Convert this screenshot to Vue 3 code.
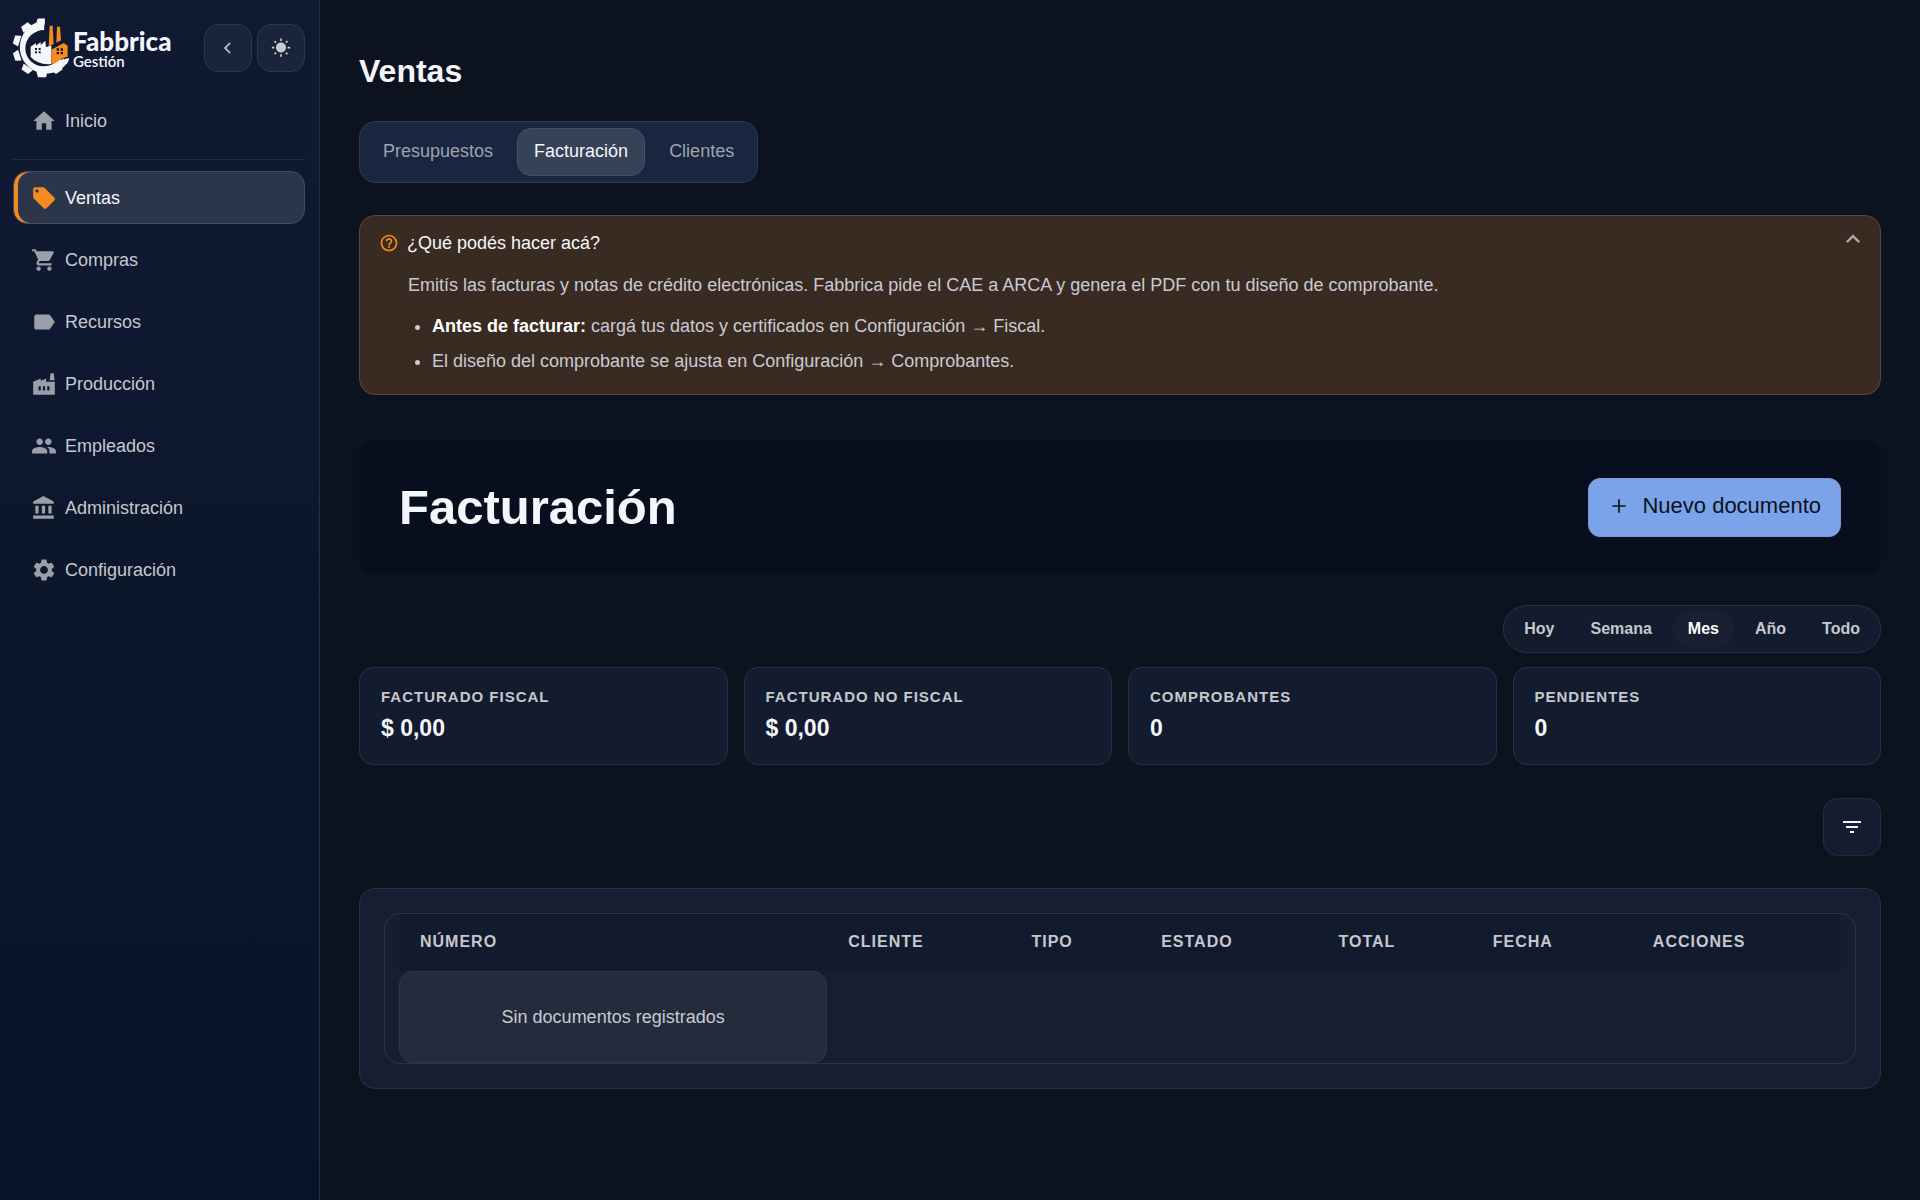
<script setup>
import { ref } from 'vue'

const nav = [
  { label: 'Ventas', d: 'M21.41 11.58l-9-9C12.05 2.22 11.55 2 11 2H4c-1.1 0-2 .9-2 2v7c0 .55.22 1.05.59 1.42l9 9c.36.36.86.58 1.41.58.55 0 1.05-.22 1.41-.59l7-7c.37-.36.59-.86.59-1.41 0-.55-.23-1.06-.59-1.42zM5.5 7C4.67 7 4 6.33 4 5.5S4.67 4 5.5 4 7 4.67 7 5.5 6.33 7 5.5 7z' },
  { label: 'Compras', d: 'M7 18c-1.1 0-1.99.9-1.99 2S5.9 22 7 22s2-.9 2-2-.9-2-2-2zM1 2v2h2l3.6 7.59-1.35 2.45c-.16.28-.25.61-.25.96 0 1.1.9 2 2 2h12v-2H7.42c-.14 0-.25-.11-.25-.25l.03-.12.9-1.63h7.45c.75 0 1.41-.41 1.75-1.03l3.58-6.49c.08-.14.12-.31.12-.48 0-.55-.45-1-1-1H5.21l-.94-2H1zm16 16c-1.1 0-1.99.9-1.99 2s.89 2 1.99 2 2-.9 2-2-.9-2-2-2z' },
  { label: 'Recursos', d: 'M17.63 5.84C17.27 5.33 16.67 5 16 5L5 5.01C3.9 5.01 3 5.9 3 7v10c0 1.1.9 1.99 2 1.99L16 19c.67 0 1.27-.33 1.63-.84L22 12l-4.37-6.16z' },
  { label: 'Producción', d: 'M22 10v12H2V10l7-3v2l5-2v3H22zM17.2 8.5L18 2h3l.8 6.5H17.2zM11 18h2v-4h-2v4zM7 18h2v-4H7v4zM17 14h-2v4h2v-4z' },
  { label: 'Empleados', d: 'M16 11c1.66 0 2.99-1.34 2.99-3S17.66 5 16 5c-1.66 0-3 1.34-3 3s1.34 3 3 3zm-8 0c1.66 0 2.99-1.34 2.99-3S9.66 5 8 5C6.34 5 5 6.34 5 8s1.34 3 3 3zm0 2c-2.33 0-7 1.17-7 3.5V19h14v-2.5c0-2.33-4.67-3.5-7-3.5zm8 0c-.29 0-.62.02-.97.05 1.16.84 1.97 1.97 1.97 3.45V19h6v-2.5c0-2.33-4.67-3.5-7-3.5z' },
  { label: 'Administración', d: 'M4 10v7h3v-7H4zm6 0v7h3v-7h-3zM2 22h19v-3H2v3zm14-12v7h3v-7h-3zm-4.5-9L2 6v2h19V6l-9.5-5z' },
  { label: 'Configuración', d: 'M19.14 12.94c.04-.3.06-.61.06-.94 0-.32-.02-.64-.07-.94l2.03-1.58c.18-.14.23-.41.12-.61l-1.92-3.32c-.12-.22-.37-.29-.59-.22l-2.39.96c-.5-.38-1.03-.7-1.62-.94l-.36-2.54c-.04-.24-.24-.41-.48-.41h-3.84c-.24 0-.43.17-.47.41l-.36 2.54c-.59.24-1.13.57-1.62.94l-2.39-.96c-.22-.08-.47 0-.59.22L2.74 8.87c-.12.21-.08.47.12.61l2.03 1.58c-.05.3-.09.63-.09.94s.02.64.07.94l-2.03 1.58c-.18.14-.23.41-.12.61l1.92 3.32c.12.22.37.29.59.22l2.39-.96c.5.38 1.03.7 1.62.94l.36 2.54c.05.24.24.41.48.41h3.84c.24 0 .44-.17.47-.41l.36-2.54c.59-.24 1.13-.56 1.62-.94l2.39.96c.22.08.47 0 .59-.22l1.92-3.32c.12-.22.07-.47-.12-.61l-2.01-1.58zM12 15.6c-1.98 0-3.6-1.62-3.6-3.6s1.62-3.6 3.6-3.6 3.6 1.62 3.6 3.6-1.62 3.6-3.6 3.6z' },
]
const gearTeeth = [-91, -127, -163, 162, 126, 90, 54, 25]

const tabs = ['Presupuestos', 'Facturación', 'Clientes']
const activeTab = ref('Facturación')

const periods = ['Hoy', 'Semana', 'Mes', 'Año', 'Todo']
const activePeriod = ref('Mes')

const helpOpen = ref(true)

const stats = [
  { label: 'Facturado fiscal', value: '$ 0,00' },
  { label: 'Facturado no fiscal', value: '$ 0,00' },
  { label: 'Comprobantes', value: '0' },
  { label: 'Pendientes', value: '0' },
]
const columns = [
  { key: 'numero', label: 'Número' },
  { key: 'cliente', label: 'Cliente' },
  { key: 'tipo', label: 'Tipo' },
  { key: 'estado', label: 'Estado' },
  { key: 'total', label: 'Total' },
  { key: 'fecha', label: 'Fecha' },
  { key: 'acciones', label: 'Acciones' },
]
</script>

<template>
  <div class="app">
    <aside class="sidebar">
      <div class="brand-row">
        <a class="brand" href="#">
          <svg class="gear" viewBox="24 24 168 180" aria-hidden="true">
            <g fill="#f5f6fb">
              <path d="M118 26V60A54 54 0 1 0 162 147L190 154A79 79 0 1 1 100 36V26z" />
              <path
                v-for="angle in gearTeeth"
                :key="angle"
                d="M-17 -70L-12 -88H12L17 -70z"
                :transform="`translate(111 114) rotate(${angle + 90})`"
              />
            </g>
            <circle cx="115" cy="115" r="54" fill="#0f1932" />
            <path d="M120 22h80v120l-22 6-60-40z" fill="#0f1932" />
            <path d="M77 110L93 99V107L107 96V105L121 92L123 112L139 106V162Q100 166 77 141z" fill="#f5f6fb" />
            <path d="M139 119L176 99L188 107V140Q166 145 156 156Q148 161 139 162z" fill="#f58a1f" />
            <path d="M131 109L134 47H143L146 102zM154 98L156 50H165L168 91z" fill="#f58a1f" />
            <path d="M90 114h6v6h-6zm11 0h6v6h-6zM90 124h6v6h-6zm11 0h6v6h-6zM155 115h7v7h-7zm12 0h7v7h-7zM155 126h7v7h-7zm12 0h7v7h-7z" fill="#0f1932" />
          </svg>
          <span class="brand-text">
            <span class="brand-name">Fabbrica</span>
            <span class="brand-sub">Gestión</span>
          </span>
        </a>
        <div class="brand-actions">
          <button class="square" type="button" aria-label="Contraer menú">
            <svg viewBox="0 0 24 24" width="20" height="20"><path d="M14.5 6l-6 6 6 6" fill="none" stroke="currentColor" stroke-width="2" /></svg>
          </button>
          <button class="square" type="button" aria-label="Cambiar tema">
            <svg viewBox="0 0 24 24" width="20" height="20" fill="currentColor"><path d="M6.76 4.84l-1.8-1.79-1.41 1.41 1.79 1.79 1.42-1.41zM4 10.5H1v2h3v-2zm9-9.95h-2V3.5h2V.55zm7.45 3.91l-1.41-1.41-1.79 1.79 1.41 1.41 1.79-1.79zm-3.21 13.7l1.79 1.8 1.41-1.41-1.8-1.79-1.4 1.4zM20 10.5v2h3v-2h-3zm-8-5c-3.31 0-6 2.69-6 6s2.69 6 6 6 6-2.69 6-6-2.69-6-6-6zm-1 16.95h2V19.5h-2v2.95zm-7.45-3.91l1.41 1.41 1.79-1.8-1.41-1.41-1.79 1.8z" /></svg>
          </button>
        </div>
      </div>

      <nav class="nav" aria-label="Principal">
        <a class="nav-item" href="#">
          <svg viewBox="0 0 24 24" aria-hidden="true"><path d="M10 20v-6h4v6h5v-8h3L12 3 2 12h3v8z" /></svg>
          Inicio
        </a>
        <hr class="divider" />
        <a v-for="item in nav" :key="item.label" class="nav-item" :class="{ active: item.label === 'Ventas' }" href="#">
          <svg viewBox="0 0 24 24" aria-hidden="true"><path :d="item.d" /></svg>
          {{ item.label }}
        </a>
      </nav>
    </aside>

    <main class="main">
      <h1 class="page-title">Ventas</h1>

      <div class="tabs">
        <button
          v-for="tab in tabs"
          :key="tab"
          type="button"
          class="tab"
          :class="{ active: tab === activeTab }"
          @click="activeTab = tab"
        >{{ tab }}</button>
      </div>

      <section class="help">
        <button class="help-head" type="button" :aria-expanded="helpOpen" @click="helpOpen = !helpOpen">
          <svg class="help-icon" viewBox="0 0 24 24" aria-hidden="true"><path d="M11 18h2v-2h-2v2zm1-16C6.48 2 2 6.48 2 12s4.48 10 10 10 10-4.48 10-10S17.52 2 12 2zm0 18c-4.41 0-8-3.59-8-8s3.59-8 8-8 8 3.59 8 8-3.59 8-8 8zm0-14c-2.21 0-4 1.79-4 4h2c0-1.1.9-2 2-2s2 .9 2 2c0 2-3 1.75-3 5h2c0-2.25 3-2.5 3-5 0-2.21-1.79-4-4-4z" /></svg>
          <span class="help-title">¿Qué podés hacer acá?</span>
          <svg class="help-chevron" viewBox="0 0 24 24" aria-hidden="true"><path d="M12 8l-6 6 1.41 1.41L12 10.83l4.59 4.58L18 14z" /></svg>
        </button>
        <div v-if="helpOpen" class="help-body">
          <p>Emitís las facturas y notas de crédito electrónicas. Fabbrica pide el CAE a ARCA y genera el PDF con tu diseño de comprobante.</p>
          <ul>
            <li><strong>Antes de facturar:</strong> cargá tus datos y certificados en Configuración → Fiscal.</li>
            <li>El diseño del comprobante se ajusta en Configuración → Comprobantes.</li>
          </ul>
        </div>
      </section>

      <header class="hero">
        <h2>Facturación</h2>
        <button class="primary" type="button">
          <svg viewBox="0 0 24 24" width="20" height="20" aria-hidden="true"><path d="M20 13h-7v7h-2v-7H4v-2h7V4h2v7h7z" fill="currentColor" /></svg>
          Nuevo documento
        </button>
      </header>

      <div class="periods">
        <button
          v-for="period in periods"
          :key="period"
          type="button"
          class="period"
          :class="{ active: period === activePeriod }"
          @click="activePeriod = period"
        >{{ period }}</button>
      </div>

      <dl class="stats">
        <div v-for="stat in stats" :key="stat.label" class="stat">
          <dt>{{ stat.label }}</dt>
          <dd>{{ stat.value }}</dd>
        </div>
      </dl>

      <button class="filter" type="button" aria-label="Filtros">
        <svg viewBox="0 0 24 24" width="24" height="24" aria-hidden="true"><path d="M10 18h4v-2h-4v2zM3 6v2h18V6H3zm3 7h12v-2H6v2z" fill="currentColor" /></svg>
      </button>

      <section class="panel">
        <div class="table-wrap">
          <table>
            <colgroup>
              <col v-for="column in columns" :key="column.key" :class="`col-${column.key}`" />
            </colgroup>
            <thead>
              <tr>
                <th v-for="column in columns" :key="column.key" scope="col">{{ column.label }}</th>
              </tr>
            </thead>
            <tbody>
              <tr>
                <td>Sin documentos registrados</td>
              </tr>
            </tbody>
          </table>
        </div>
      </section>
    </main>
  </div>
</template>

<style>
body {
  background: #0d131e;
}
</style>

<style scoped>
.app,
.app * {
  box-sizing: border-box;
}

.app {
  display: flex;
  min-height: 100vh;
  background: #0d131e;
  color: #f5f6fb;
  font: 18px/24px "Liberation Sans", Arial, sans-serif;
}

button {
  font: inherit;
  color: inherit;
  margin: 0;
  cursor: pointer;
}

a {
  color: inherit;
  text-decoration: none;
}

/* Sidebar */
.sidebar {
  flex: 0 0 320px;
  padding: 18px 14px 18px 13px;
  border-right: 1px solid #242f45;
  background: linear-gradient(#0f1932 0%, #0e1830 36%, #0c172c 44%, #0a1428 100%);
}

.brand-row {
  display: flex;
  align-items: center;
  justify-content: space-between;
  height: 60px;
}

.brand {
  display: flex;
  align-items: center;
  gap: 4px;
}

.gear {
  width: 56px;
  height: 60px;
}

.brand-text {
  display: flex;
  flex-direction: column;
  padding-top: 2px;
  font-family: Lato, "Open Sans", sans-serif;
}

.brand-name {
  font-size: 26px;
  font-weight: 900;
  line-height: 24px;
}

.brand-sub {
  font-size: 15px;
  font-weight: 600;
  line-height: 16px;
}

.brand-actions {
  display: flex;
  gap: 5px;
}

.square {
  display: grid;
  place-items: center;
  width: 48px;
  height: 48px;
  padding: 0;
  border: 1px solid #2b3650;
  border-radius: 14px;
  background: #1a253b;
  color: #c9cbd2;
}

.nav {
  display: flex;
  flex-direction: column;
  gap: 9px;
  margin-top: 16px;
}

.nav-item {
  display: flex;
  align-items: center;
  gap: 8px;
  height: 53px;
  padding: 0 17px;
  border: 1px solid transparent;
  border-radius: 14px;
  color: #c6c8cd;
}

.nav-item svg {
  width: 26px;
  height: 26px;
  fill: #9b9fa8;
}

.nav-item.active {
  border-color: #414c62;
  background: #2b364b;
  box-shadow: inset 4px 0 0 #f58a1f;
  color: #f5f6fb;
}

.nav-item.active svg {
  fill: #f58a1f;
}

.divider {
  width: 100%;
  height: 1px;
  margin: 3px 0 2px;
  border: 0;
  background: #212d41;
}

/* Content */
.main {
  flex: 1;
  min-width: 0;
  display: flex;
  flex-direction: column;
  align-items: flex-start;
  padding: 52px 39px;
}

.page-title {
  margin: 0;
  font-size: 32px;
  line-height: 38px;
}

.tabs {
  display: flex;
  gap: 7px;
  margin-top: 31px;
  padding: 6px;
  border: 1px solid #2b3853;
  border-radius: 16px;
  background: #1a2640;
}

.tab {
  height: 48px;
  padding: 0 16px 2px;
  border: 1px solid transparent;
  border-radius: 14px;
  background: none;
  color: #9ea3ad;
}

.tab.active {
  border-color: #465164;
  background: #364255;
  color: #f5f6fb;
}

.help {
  align-self: stretch;
  margin-top: 32px;
  padding: 15px 19px 17px;
  border: 1px solid #594638;
  border-radius: 16px;
  background: #3a2b22;
}

.help-head {
  display: flex;
  align-items: center;
  width: 100%;
  padding: 0;
  border: 0;
  background: none;
  text-align: left;
}

.help-icon {
  width: 20px;
  height: 20px;
  margin-right: 8px;
  fill: #f58a1f;
}

.help-title {
  flex: 1;
}

.help-chevron {
  width: 28px;
  height: 28px;
  margin: -8px -6px 0 0;
  fill: #a9a7a8;
}

.help-body {
  padding-left: 29px;
  color: #c9cad2;
}

.help-body p {
  margin: 18px 0 17px;
}

.help-body ul {
  display: grid;
  gap: 11px;
  margin: 0 0 4px;
  padding-left: 24px;
}

.help-body strong {
  color: #ffffff;
}

.hero {
  align-self: stretch;
  display: flex;
  align-items: center;
  justify-content: space-between;
  min-height: 134px;
  margin-top: 45px;
  padding: 36px 40px;
  border-radius: 16px;
  background: #070e1e;
}

.hero h2 {
  margin: 0;
  font-size: 49px;
  line-height: 60px;
}

.primary {
  display: flex;
  align-items: center;
  gap: 13px;
  height: 59px;
  padding: 0 19px 2px 20px;
  border: 1px solid #7c99cf;
  border-radius: 12px;
  background: #7ba3ea;
  color: #0c121d;
  font-size: 22px;
}

.periods {
  align-self: flex-end;
  display: flex;
  gap: 4px;
  margin-top: 31px;
  padding: 4px;
  border: 1px solid #27324a;
  border-radius: 24px;
  background: #131c2f;
}

.period {
  height: 38px;
  padding: 0 16px;
  border: 0;
  border-radius: 19px;
  background: none;
  color: #c6c8cd;
  font-size: 16px;
  font-weight: 700;
}

.period.active {
  background: #171f31;
  color: #ffffff;
}

.stats {
  align-self: stretch;
  display: grid;
  grid-template-columns: repeat(4, 1fr);
  gap: 16px;
  margin: 14px 0 0;
}

.stat {
  height: 98px;
  padding: 17px 21px;
  border: 1px solid #27324a;
  border-radius: 14px;
  background: #131c2f;
}

.stat dt {
  color: #c6c8cd;
  font-size: 15px;
  font-weight: 700;
  letter-spacing: 1px;
  text-transform: uppercase;
}

.stat dd {
  margin: 7px 0 0;
  font-size: 23px;
  font-weight: 700;
}

.filter {
  align-self: flex-end;
  display: grid;
  place-items: center;
  width: 58px;
  height: 58px;
  margin-top: 33px;
  padding: 0;
  border: 1px solid #222d42;
  border-radius: 14px;
  background: #141d30;
}

.panel {
  align-self: stretch;
  margin-top: 32px;
  padding: 24px;
  border: 1px solid #27324a;
  border-radius: 16px;
  background: #161f31;
}

.table-wrap {
  padding: 0 14px;
  border: 1px solid #29344a;
  border-radius: 16px;
}

table {
  width: 100%;
  table-layout: fixed;
  border-collapse: separate;
  border-spacing: 0;
}

.col-numero { width: 29.7%; }
.col-cliente { width: 12.7%; }
.col-tipo { width: 9%; }
.col-estado { width: 12.3%; }
.col-total { width: 10.7%; }
.col-fecha { width: 11.1%; }
.col-acciones { width: 14.5%; }

th {
  height: 57px;
  padding: 0 21px 2px;
  background: #121b2e;
  color: #c6c8cd;
  font-size: 16px;
  letter-spacing: 1px;
  text-align: left;
  text-transform: uppercase;
}

td {
  height: 92px;
  padding: 0 20px;
  border: 1px solid #2d3747;
  border-radius: 14px;
  background: #232c3c;
  color: #c9cad0;
  text-align: center;
}
</style>
